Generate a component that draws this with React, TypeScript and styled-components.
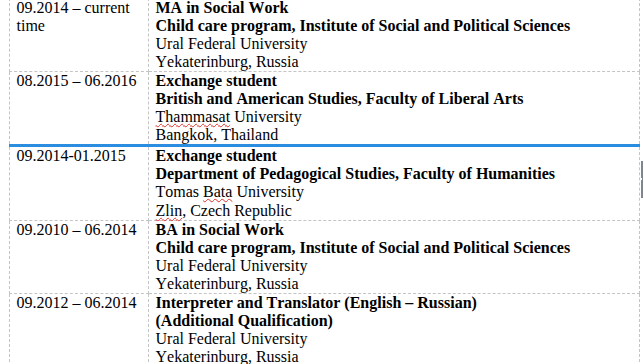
import styled, { createGlobalStyle } from 'styled-components'

const GlobalStyle = createGlobalStyle`
	html, body {
		margin: 0;
		padding: 0;
		background: #ffffff;
	}
	body {
		font-family: 'Liberation Serif', 'Times New Roman', serif;
		font-size: 16px;
		color: #000;
		font-kerning: none;
		overflow: hidden;
	}
`

type Entry = {
	period: string[]
	titles: string[]
	lines: React.ReactNode[]
	marked?: boolean
}

const Misspelled = styled.span`
	text-decoration: underline wavy #e0302a;
	text-decoration-thickness: 1px;
	text-underline-offset: 1px;
	text-decoration-skip-ink: none;
`

const entries: Entry[] = [
	{
		period: ['09.2014 – current', 'time'],
		titles: ['MA in Social Work', 'Child care program, Institute of Social and Political Sciences'],
		lines: ['Ural Federal University', 'Yekaterinburg, Russia'],
	},
	{
		period: ['08.2015 – 06.2016'],
		titles: ['Exchange student', 'British and American Studies, Faculty of Liberal Arts'],
		lines: [
			<>
				<Misspelled>Thammasat</Misspelled> University
			</>,
			'Bangkok, Thailand',
		],
	},
	{
		period: ['09.2014-01.2015'],
		titles: ['Exchange student', 'Department of Pedagogical Studies, Faculty of Humanities'],
		lines: [
			<>
				Tomas <Misspelled>Bata</Misspelled> University
			</>,
			<>
				<Misspelled>Zlin</Misspelled>, Czech Republic
			</>,
		],
		marked: true,
	},
	{
		period: ['09.2010 – 06.2014'],
		titles: ['BA in Social Work', 'Child care program, Institute of Social and Political Sciences'],
		lines: ['Ural Federal University', 'Yekaterinburg, Russia'],
	},
	{
		period: ['09.2012 – 06.2014'],
		titles: ['Interpreter and Translator (English – Russian)', '(Additional Qualification)'],
		lines: ['Ural Federal University', 'Yekaterinburg, Russia'],
	},
]

const App = () => {
	return (
		<Page>
			<GlobalStyle />
			<Table>
				<colgroup>
					<col style={{ width: 139 }} />
					<col />
				</colgroup>
				<tbody>
					{entries.map((e, i) => (
						<Row key={i} $marked={e.marked}>
							<Cell>
								{e.period.map((p, j) => (
									<Line key={j}>{p}</Line>
								))}
							</Cell>
							<Cell>
								{e.titles.map((t, j) => (
									<Title key={j}>{t}</Title>
								))}
								{e.lines.map((l, j) => (
									<Line key={j}>{l}</Line>
								))}
							</Cell>
						</Row>
					))}
				</tbody>
			</Table>
			<ScrollMark />
		</Page>
	)
}

export default App

const Page = styled.div`
	position: relative;
	width: 643px;
	height: 364px;
	overflow: hidden;
	padding-left: 9px;
	box-sizing: border-box;
`

const Table = styled.table`
	width: 631px;
	margin-top: -2.5px;
	border-collapse: collapse;
	table-layout: fixed;
	line-height: 18.1px;
`

const Row = styled.tr<{ $marked?: boolean }>`
	td {
		border: 1px dashed #c4c4c4;
		${(p) => p.$marked && 'border-top: 3px solid #2a8de0;'}
	}
`

const Cell = styled.td`
	vertical-align: top;
	padding: 0 6px 0 6.5px;
`

const Line = styled.div`
	white-space: nowrap;
`

const Title = styled(Line)`
	font-weight: bold;
`

const ScrollMark = styled.div`
	position: absolute;
	top: 161px;
	right: 0;
	width: 2px;
	height: 37px;
	background: #7c8792;
	&::after {
		content: '';
		position: absolute;
		left: 0;
		top: 17px;
		width: 1px;
		height: 2px;
		background: #ffffff;
	}
`
